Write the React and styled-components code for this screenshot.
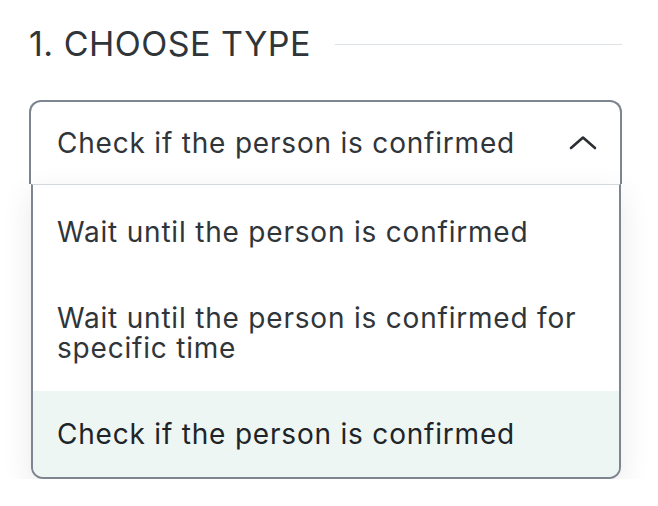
import React from 'react';
import styled, { createGlobalStyle } from 'styled-components';

const GlobalStyle = createGlobalStyle`
  body {
    margin: 0;
    background: #ffffff;
    font-family: "Inter", "Liberation Sans", sans-serif;
  }
`;

const options = [
  'Wait until the person is confirmed',
  'Wait until the person is confirmed for specific time',
  'Check if the person is confirmed',
];

const ChevronUp = () => (
  <svg width="30" height="16" viewBox="0 0 30 16" fill="none">
    <path d="M3 13 L15 2.5 L27 13" stroke="#2b2f33" strokeWidth="2.6" strokeLinecap="round" strokeLinejoin="round" />
  </svg>
);

const App = () => {
  const selected = 2;

  return (
    <>
      <GlobalStyle />
      <Page>
        <Heading>
          <Title>1. Choose type</Title>
          <Rule />
        </Heading>

        <Select>
          <Trigger>
            <span>{options[selected]}</span>
            <ChevronUp />
          </Trigger>
          <Menu>
            {options.map((opt, i) => (
              <Option key={i} $active={i === selected}>{opt}</Option>
            ))}
          </Menu>
        </Select>
      </Page>
    </>
  );
};

const Page = styled.div`
  width: 593px;
  padding: 22px 0 0 29px;
`;

const Heading = styled.div`
  display: flex;
  align-items: center;
  gap: 24px;
  height: 44px;
`;

const Title = styled.h2`
  margin: 0;
  font-family: "Inter", "Liberation Sans", sans-serif;
  font-weight: 400;
  font-size: 34px;
  letter-spacing: 0.5px;
  text-transform: uppercase;
  color: #30353a;
  white-space: nowrap;
  line-height: 44px;
`;

const Rule = styled.div`
  flex: 1;
  height: 1px;
  background: #dde2e6;
  margin-top: 1px;
`;

const Select = styled.div`
  margin-top: 34px;
  display: flex;
  flex-direction: column;
`;

const Trigger = styled.div`
  height: 84px;
  box-sizing: border-box;
  display: flex;
  align-items: center;
  justify-content: space-between;
  padding: 0 22px 0 26px;
  border: 2px solid #7d8690;
  border-bottom: none;
  border-radius: 12px 12px 0 0;
  font-size: 28px;
  letter-spacing: 0.8px;
  color: #30353a;
  line-height: 30px;
`;

const Menu = styled.div`
  margin: 0 1.5px;
  padding-top: 4px;
  border: 2px solid #7d8690;
  border-top: 1px solid #d3d8dc;
  border-radius: 0 0 12px 12px;
  overflow: hidden;
  box-shadow: 0 10px 30px rgba(30, 40, 50, 0.1);
  background: #fff;
`;

const Option = styled.div`
  padding: 28px 26px 28px 24.5px;
  font-size: 28px;
  line-height: 30px;
  letter-spacing: 0.8px;
  color: ${p => (p.$active ? '#202428' : '#30353a')};
  background: ${p => (p.$active ? '#eef6f3' : '#ffffff')};
`;

export default App;
